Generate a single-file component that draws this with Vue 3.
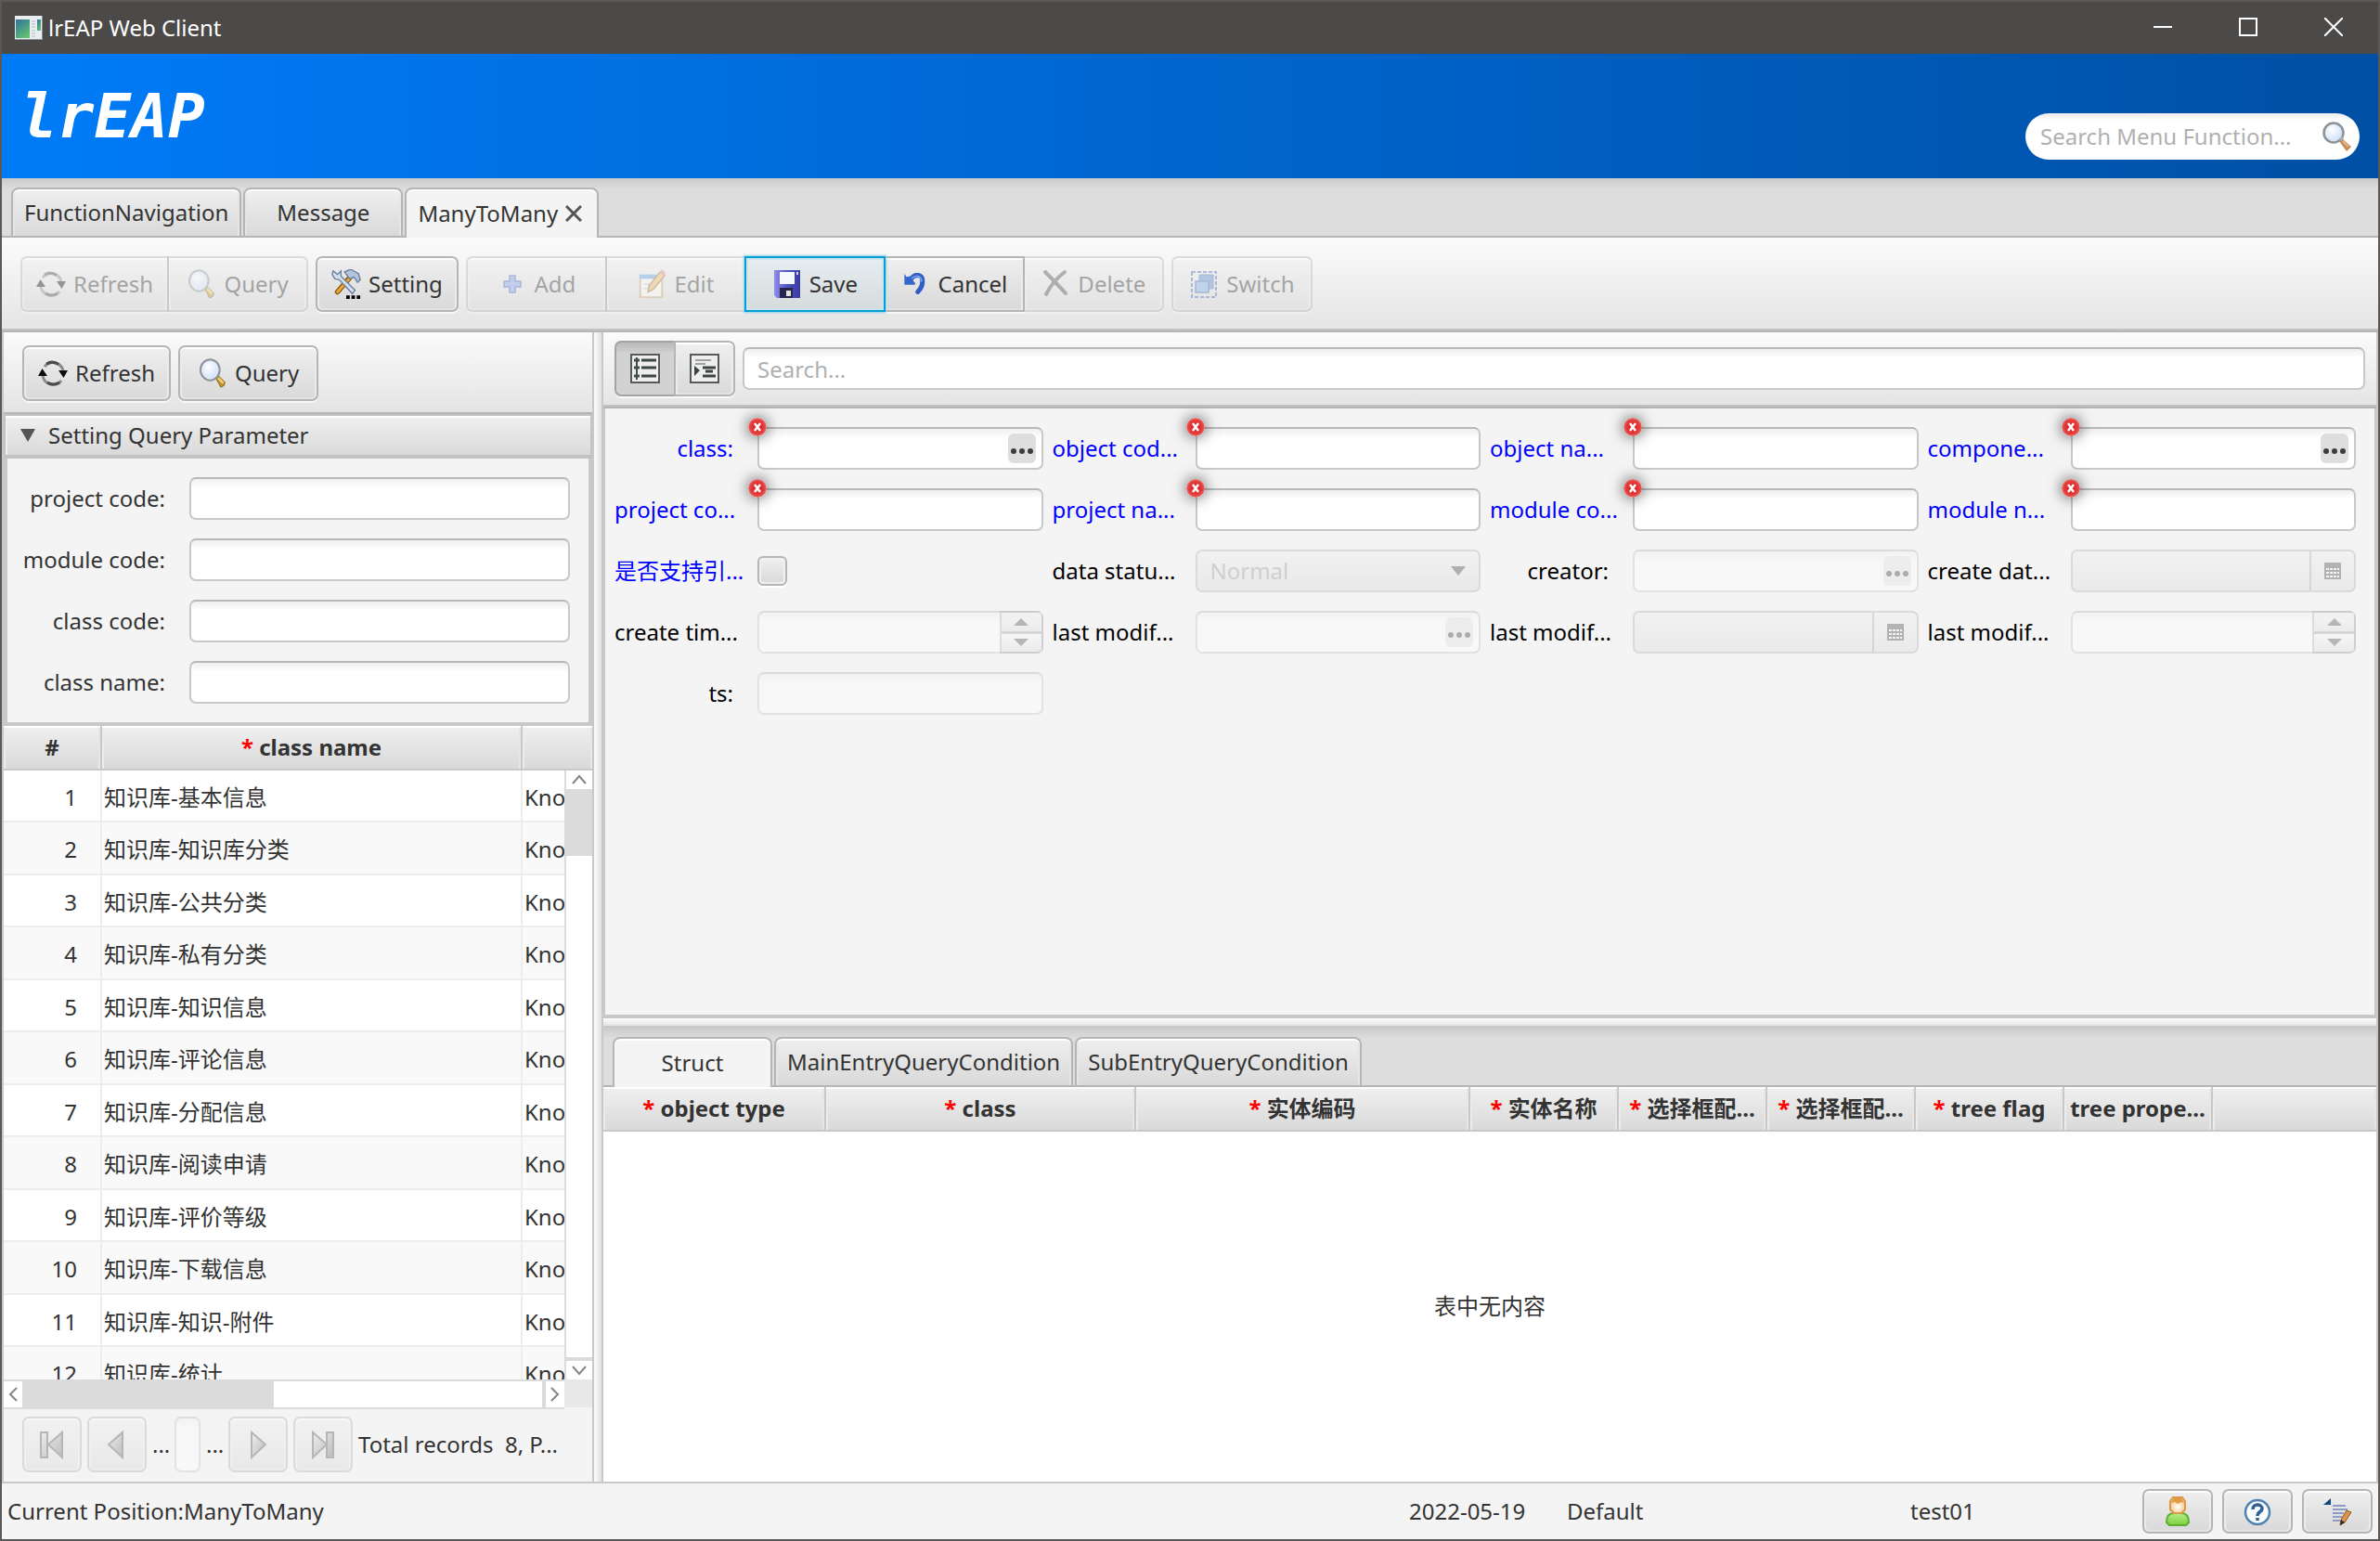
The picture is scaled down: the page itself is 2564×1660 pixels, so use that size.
<script setup>
const mainTabs = [
  { label: 'FunctionNavigation' },
  { label: 'Message' },
  { label: 'ManyToMany', active: true, closable: true },
]

const toolGroups = [
  [
    { label: 'Refresh', icon: 'refresh', disabled: true },
    { label: 'Query', icon: 'find', disabled: true },
  ],
  [{ label: 'Setting', icon: 'tools' }],
  [
    { label: 'Add', icon: 'add', disabled: true },
    { label: 'Edit', icon: 'edit', disabled: true },
    { label: 'Save', icon: 'save', focused: true },
    { label: 'Cancel', icon: 'undo' },
    { label: 'Delete', icon: 'delete', disabled: true },
  ],
  [{ label: 'Switch', icon: 'switch', disabled: true }],
]

const queryFields = ['project code:', 'module code:', 'class code:', 'class name:']

const classNames = [
  '知识库-基本信息',
  '知识库-知识库分类',
  '知识库-公共分类',
  '知识库-私有分类',
  '知识库-知识信息',
  '知识库-评论信息',
  '知识库-分配信息',
  '知识库-阅读申请',
  '知识库-评价等级',
  '知识库-下载信息',
  '知识库-知识-附件',
  '知识库-统计',
]

const formFields = [
  { label: 'class:', type: 'lookup', required: true, end: true },
  { label: 'object cod...', type: 'text', required: true },
  { label: 'object na...', type: 'text', required: true },
  { label: 'compone...', type: 'lookup', required: true },
  { label: 'project co...', type: 'text', required: true },
  { label: 'project na...', type: 'text', required: true },
  { label: 'module co...', type: 'text', required: true },
  { label: 'module n...', type: 'text', required: true },
  { label: '是否支持引...', type: 'check', blue: true },
  { label: 'data statu...', type: 'select', disabled: true },
  { label: 'creator:', type: 'lookup', disabled: true, end: true },
  { label: 'create dat...', type: 'date', disabled: true },
  { label: 'create tim...', type: 'spinner', disabled: true },
  { label: 'last modif...', type: 'lookup', disabled: true },
  { label: 'last modif...', type: 'date', disabled: true },
  { label: 'last modif...', type: 'spinner', disabled: true },
  { label: 'ts:', type: 'text', disabled: true, end: true },
]

const subTabs = [
  { label: 'Struct', active: true },
  { label: 'MainEntryQueryCondition' },
  { label: 'SubEntryQueryCondition' },
]

const columns = [
  { label: 'object type', required: true, width: 240 },
  { label: 'class', required: true, width: 334 },
  { label: '实体编码', required: true, width: 360 },
  { label: '实体名称', required: true, width: 160 },
  { label: '选择框配...', required: true, width: 160 },
  { label: '选择框配...', required: true, width: 160 },
  { label: 'tree flag', required: true, width: 160 },
  { label: 'tree prope...', width: 160 },
]
</script>

<template>
  <div class="window">
    <svg class="sprite" width="0" height="0" aria-hidden="true">
      <defs>
        <radialGradient id="g-lens" cx="0.4" cy="0.35" r="0.7">
          <stop offset="0" stop-color="#ffffff" />
          <stop offset="1" stop-color="#c9dcf8" />
        </radialGradient>
        <linearGradient id="g-disk" x1="0" y1="0" x2="1" y2="0">
          <stop offset="0" stop-color="#8f8fe8" />
          <stop offset="0.5" stop-color="#5252c4" />
          <stop offset="1" stop-color="#3a3aa0" />
        </linearGradient>
        <linearGradient id="g-gray" x1="0" y1="0" x2="1" y2="1">
          <stop offset="0" stop-color="#e4e4e4" />
          <stop offset="1" stop-color="#6c6c6c" />
        </linearGradient>
        <linearGradient id="g-green" x1="0" y1="0" x2="0" y2="1">
          <stop offset="0" stop-color="#b4ee8a" />
          <stop offset="1" stop-color="#7bcf3c" />
        </linearGradient>
        <radialGradient id="g-head" cx="0.5" cy="0.6" r="0.6">
          <stop offset="0" stop-color="#ffffff" />
          <stop offset="1" stop-color="#f6c07c" />
        </radialGradient>
        <linearGradient id="g-app" x1="0" y1="0" x2="0.6" y2="1">
          <stop offset="0" stop-color="#2f6f9f" />
          <stop offset="1" stop-color="#5fbf72" />
        </linearGradient>
        <radialGradient id="g-err" cx="0.5" cy="0.5" r="0.5">
          <stop offset="0" stop-color="#d81e1e" />
          <stop offset="0.7" stop-color="#e23a3a" />
          <stop offset="1" stop-color="#ea6a66" />
        </radialGradient>
      </defs>
      <symbol id="i-app" viewBox="0 0 30 26">
        <path d="M0 0h30v26H0z" fill="#e9edf0" />
        <path d="M1 4h15v20H1z" fill="url(#g-app)" />
        <path d="M24 4h4v12h-4z" fill="url(#g-app)" />
        <path d="M18 6h4M18 9h4M18 12h4M18 16h4M18 19h4M18 22h4" stroke="#b9bdc1" stroke-width="1" />
        <path d="M0 25.500h30M29.500 0v26" stroke="#8b9196" stroke-width="1" />
      </symbol>
      <symbol id="i-refresh" viewBox="0 0 32 32">
        <path d="M7 9A11.500 12 0 0 1 27 13" fill="none" stroke="#8a8a8a" stroke-width="3" />
        <path d="M25 24A11.500 12 0 0 1 5 19" fill="none" stroke="#8a8a8a" stroke-width="3" />
        <path d="M9 6A12 12 0 0 1 22 6.500M23 26A12 12 0 0 1 10 26" fill="none" stroke="#4a4a4a" stroke-width="3" />
        <path d="M22 13h10l-4.500 8z" fill="#0c0c0c" />
        <path d="M0 19l4.500-8L10 19z" fill="#0c0c0c" />
      </symbol>
      <symbol id="i-find" viewBox="0 0 32 36">
        <path d="M20 24l3-3 8 8-1 4-4 2z" fill="#c9922a" stroke="#7a5a1e" stroke-width="1" />
        <path d="M22 25l2-2 6 6-2 2z" fill="#f2d070" />
        <ellipse cx="13" cy="14" rx="11.500" ry="12.500" fill="url(#g-lens)" stroke="#8f9499" stroke-width="2.500" />
        <ellipse cx="13" cy="14" rx="9.500" ry="10.500" fill="none" stroke="#dfe9fa" stroke-width="1.500" />
      </symbol>
      <symbol id="i-find-copper" viewBox="0 0 32 32">
        <path d="M18 21l3-3 10 9-5 5z" fill="#c38a55" />
        <path d="M21 22l2-2 6 6-2 2z" fill="#e0b184" />
        <circle cx="12" cy="12" r="10.500" fill="url(#g-lens)" stroke="#8d9298" stroke-width="2.500" />
        <path d="M19 20l3-3" stroke="#a9adb3" stroke-width="3" />
      </symbol>
      <symbol id="i-tools" viewBox="0 0 32 34">
        <path d="M24 5L6 26" stroke="#8a5a14" stroke-width="6" stroke-linecap="round" />
        <path d="M22 8L6 26" stroke="#f0a830" stroke-width="3" stroke-linecap="round" />
        <path d="M14 3l7-3 9 5 2 7-3 3-4-6-5 2z" fill="#b4c6de" stroke="#6c819e" stroke-width="1.500" />
        <path d="M1 2l5 4 4-4v6l16 16-3 4L8 12 3 11 0 6z" fill="#d3e0f0" stroke="#6c819e" stroke-width="1.500" />
        <path d="M16 30h4v4h-4zM22 30h4v4h-4zM28 30h4v4h-4z" fill="#000000" />
      </symbol>
      <symbol id="i-add" viewBox="0 0 32 32">
        <path d="M14 7h6v6h6v6h-6v6h-6v-6H8v-6h6z" fill="#7da0e8" stroke="#3f62b8" stroke-width="1.500" />
      </symbol>
      <symbol id="i-edit" viewBox="0 0 32 34">
        <path d="M3 8h25v24H3z" fill="#fbfbf2" stroke="#c3a368" stroke-width="2" />
        <path d="M2 6h22v5H2z" fill="#5aa0d8" />
        <path d="M7 17h8M7 22h6" stroke="#c8d4e2" stroke-width="2" />
        <path d="M26 3l5 4-13 16-6 3 1-7z" fill="#e8b860" stroke="#9a6a28" stroke-width="1.500" />
        <path d="M25 4l3-4 4 4-2 4z" fill="#e08a84" />
      </symbol>
      <symbol id="i-save" viewBox="0 0 32 32">
        <path d="M2 1h28v30H5l-3-3z" fill="url(#g-disk)" />
        <path d="M8 3h16v13H8z" fill="#f6f8ff" />
        <path d="M26 3h2v3h-2z" fill="#d8d8ff" />
        <path d="M8 20h14v11H8z" fill="#26264c" />
        <path d="M15 23h5v6h-5z" fill="#e2e2e2" />
      </symbol>
      <symbol id="i-undo" viewBox="-2 -2 38 38">
        <path d="M10 11C15 3 26 4 25 14c0 7-3 10-6 13" fill="none" stroke="#2f5fc4" stroke-width="6" stroke-linecap="round" />
        <path d="M11 10C16 5 24 6 24 14" fill="none" stroke="#7ba6ee" stroke-width="2" />
        <path d="M2 4l3 4 3-1 8 9-1 2H2z" fill="#3467cc" />
      </symbol>
      <symbol id="i-delete" viewBox="0 0 32 32">
        <path d="M5 3C11 9 19 17 27 26M26 3C18 9 11 17 6 27" fill="none" stroke="#4e4e4e" stroke-width="4" stroke-linecap="round" />
      </symbol>
      <symbol id="i-switch" viewBox="0 0 32 32">
        <path d="M3 3h26v27H3z" fill="none" stroke="#4267b4" stroke-width="2" stroke-dasharray="4 2" />
        <path d="M11 6h15v15H11z" fill="#5b86cc" stroke="#3d66b0" stroke-width="1" />
        <path d="M7 13h14v12H7z" fill="#7aaee4" stroke="#3d66b0" stroke-width="1.500" />
      </symbol>
      <symbol id="i-list" viewBox="0 0 32 32">
        <path d="M1 1h30v30H1z" fill="#eeeeee" stroke="#555b5b" stroke-width="2" />
        <path d="M7 4v24" stroke="#454c4c" stroke-width="2" />
        <path d="M12 7h16M12 15h16M12 24h16" stroke="#3c4444" stroke-width="3" />
        <path d="M4 7h6M4 15h6M4 24h6" stroke="#454c4c" stroke-width="3" />
      </symbol>
      <symbol id="i-outline" viewBox="0 0 32 32">
        <path d="M1 1h30v30H1z" fill="#eeeeee" stroke="#555b5b" stroke-width="2" />
        <path d="M6 7h17M6 11h11" stroke="#a2a2a2" stroke-width="2" />
        <path d="M14 15h14M17 19h8M14 24h14" stroke="#3c4444" stroke-width="3" />
        <path d="M5 13l6 5-6 6z" fill="#3c4444" />
      </symbol>
      <symbol id="i-error" viewBox="0 0 20 20">
        <circle cx="10" cy="10" r="10" fill="url(#g-err)" />
        <path d="M7 6l6 8M13 6l-6 8" stroke="#ffffff" stroke-width="2.500" />
      </symbol>
      <symbol id="i-calendar" viewBox="0 0 18 20">
        <path d="M0 1h18v18H0z" fill="#5a5a5a" />
        <path d="M2 8h3M6 8h3M10 8h3M14 8h2M2 12h3M6 12h3M10 12h3M14 12h2M2 16h3M6 16h3M10 16h3M14 16h2" stroke="#ffffff" stroke-width="2" />
      </symbol>
      <symbol id="i-first" viewBox="0 0 32 32">
        <path d="M4 3h7v27H4zM27 3v27L12 16z" fill="url(#g-gray)" stroke="#5c5c5c" stroke-width="2" />
      </symbol>
      <symbol id="i-prev" viewBox="0 0 32 32">
        <path d="M22 3v27L7 16z" fill="url(#g-gray)" stroke="#5c5c5c" stroke-width="2" />
      </symbol>
      <symbol id="i-next" viewBox="0 0 32 32">
        <path d="M9 3v27l15-14z" fill="url(#g-gray)" stroke="#5c5c5c" stroke-width="2" />
      </symbol>
      <symbol id="i-last" viewBox="0 0 32 32">
        <path d="M20 3h7v27h-7zM5 3v27l15-14z" fill="url(#g-gray)" stroke="#5c5c5c" stroke-width="2" />
      </symbol>
      <symbol id="i-user" viewBox="0 0 32 32">
        <path d="M4 28c0-7 3-10 8-10h8c5 0 8 3 8 10l-3 3H7z" fill="url(#g-green)" stroke="#5fae2e" stroke-width="2" />
        <path d="M8 5l3-4h10l3 4v9l-4 4h-8l-4-4z" fill="url(#g-head)" stroke="#dc9a44" stroke-width="2" />
        <path d="M9 7l3-5h8l3 5-3-1-4 2-3-2z" fill="#e09c45" />
      </symbol>
      <symbol id="i-help" viewBox="0 0 32 32">
        <circle cx="16" cy="17" r="13" fill="#fbfdff" stroke="#4c82b2" stroke-width="2.500" />
        <path d="M11 14c0-7 10-6 10-1 0 4-5 3-5 8M16 23v3" fill="none" stroke="#2f6295" stroke-width="3.500" />
      </symbol>
      <symbol id="i-note" viewBox="0 0 32 32">
        <path d="M1 9l8-7v7z" fill="#0f4a7a" />
        <path d="M11 10h14M11 14h16M11 18h12M11 22h10M11 26h8" stroke="#8e9cc8" stroke-width="2" />
        <path d="M26 15l5 2-7 11-5 3 1-6z" fill="#dc9448" stroke="#8a5a2a" stroke-width="1" />
        <path d="M20 25l4 3-5 3z" fill="#2c2c2c" />
      </symbol>
    </svg>

    <div class="titlebar">
      <svg class="app-icon"><use href="#i-app" /></svg>
      <span class="title">lrEAP Web Client</span>
      <button class="win-btn" aria-label="Minimize">
        <svg width="20" height="20"><path d="M0 10h20" stroke="#fff" stroke-width="2" /></svg>
      </button>
      <button class="win-btn" aria-label="Maximize">
        <svg width="20" height="20"><path d="M1 1h18v18H1z" fill="none" stroke="#fff" stroke-width="2" /></svg>
      </button>
      <button class="win-btn" aria-label="Close">
        <svg width="20" height="20"><path d="M0 0l20 20M20 0L0 20" stroke="#fff" stroke-width="2" /></svg>
      </button>
    </div>

    <header class="banner">
      <h1 class="logo">lrEAP</h1>
      <div class="menu-search">
        <input type="text" aria-label="Search Menu Function" placeholder="Search Menu Function..." />
        <svg class="icon"><use href="#i-find-copper" /></svg>
      </div>
    </header>

    <nav class="tabs">
      <button v-for="t in mainTabs" :key="t.label" class="tab" :class="{ active: t.active }">
        {{ t.label }}
        <svg v-if="t.closable" class="tab-close" viewBox="0 0 18 18">
          <path d="M1 1l16 16M17 1L1 17" stroke="#555" stroke-width="3" />
        </svg>
      </button>
    </nav>

    <div class="toolbar main-toolbar">
      <div v-for="(group, g) in toolGroups" :key="g" class="group">
        <button
          v-for="b in group"
          :key="b.label"
          class="btn"
          :class="{ focused: b.focused }"
          :disabled="b.disabled"
        >
          <svg class="icon"><use :href="'#i-' + b.icon" /></svg>{{ b.label }}
        </button>
      </div>
    </div>

    <main class="body">
      <section class="left">
        <div class="toolbar left-toolbar">
          <button class="btn"><svg class="icon"><use href="#i-refresh" /></svg>Refresh</button>
          <button class="btn"><svg class="icon"><use href="#i-find" /></svg>Query</button>
        </div>

        <button class="pane-title">
          <svg width="16" height="16"><path d="M0 1h16L8 15z" fill="#555" /></svg>
          Setting Query Parameter
        </button>
        <form class="query-form">
          <template v-for="(label, i) in queryFields" :key="label">
            <label :for="'q' + i">{{ label }}</label>
            <input :id="'q' + i" class="field" type="text" />
          </template>
        </form>

        <div class="list">
          <table class="grid list-grid">
            <colgroup>
              <col class="col-no" />
              <col class="col-name" />
              <col />
            </colgroup>
            <thead>
              <tr>
                <th>#</th>
                <th><span class="star">*</span> class name</th>
                <th></th>
              </tr>
            </thead>
            <tbody>
              <tr v-for="(name, i) in classNames" :key="name">
                <td class="no">{{ i + 1 }}</td>
                <td>{{ name }}</td>
                <td>Kno</td>
              </tr>
            </tbody>
          </table>
          <div class="vscroll">
            <svg class="v-arrow" viewBox="0 0 28 20"><path d="M7 14l7-8 7 8" fill="none" stroke="#858585" stroke-width="2" /></svg>
            <div class="v-track"><div class="v-thumb"></div></div>
            <svg class="v-arrow" viewBox="0 0 28 20"><path d="M7 6l7 8 7-8" fill="none" stroke="#858585" stroke-width="2" /></svg>
          </div>
        </div>
        <div class="hscroll">
          <div class="h-bar">
            <svg class="h-arrow" viewBox="0 0 20 28"><path d="M14 7l-7 7 7 7" fill="none" stroke="#858585" stroke-width="2" /></svg>
            <div class="h-track"><div class="h-thumb"></div></div>
            <svg class="h-arrow" viewBox="0 0 20 28"><path d="M6 7l7 7-7 7" fill="none" stroke="#858585" stroke-width="2" /></svg>
          </div>
          <div class="corner"></div>
        </div>

        <div class="pager">
          <button class="btn square" disabled aria-label="First page"><svg class="icon"><use href="#i-first" /></svg></button>
          <button class="btn square" disabled aria-label="Previous page"><svg class="icon"><use href="#i-prev" /></svg></button>
          <span class="dots">...</span>
          <input class="field page-no" type="text" disabled aria-label="Page" />
          <span class="dots">...</span>
          <button class="btn square" disabled aria-label="Next page"><svg class="icon"><use href="#i-next" /></svg></button>
          <button class="btn square" disabled aria-label="Last page"><svg class="icon"><use href="#i-last" /></svg></button>
          <span class="total">Total records&nbsp; 8, P...</span>
        </div>
      </section>

      <div class="split-v"></div>

      <section class="right">
        <div class="toolbar right-toolbar">
          <div class="group">
            <button class="btn toggle on" aria-label="List view"><svg class="icon"><use href="#i-list" /></svg></button>
            <button class="btn toggle" aria-label="Outline view"><svg class="icon"><use href="#i-outline" /></svg></button>
          </div>
          <input class="field" type="text" placeholder="Search..." aria-label="Search" />
        </div>

        <form class="form">
          <div class="form-grid">
            <template v-for="(f, i) in formFields" :key="i">
              <label :for="'f' + i" :class="{ blue: f.required || f.blue, end: f.end }">{{ f.label }}</label>
              <div class="cell">
                <input v-if="f.type === 'check'" :id="'f' + i" class="check" type="checkbox" />
                <template v-else-if="f.type === 'select'">
                  <select :id="'f' + i" class="field select" disabled>
                    <option>Normal</option>
                  </select>
                  <svg class="caret" viewBox="0 0 16 10"><path d="M0 0h16L8 10z" fill="#555" /></svg>
                </template>
                <input
                  v-else
                  :id="'f' + i"
                  class="field"
                  :class="{ shaded: f.type === 'date' }"
                  type="text"
                  :disabled="f.disabled"
                />
                <button v-if="f.type === 'lookup'" type="button" class="lookup" :disabled="f.disabled" aria-label="Choose">
                  <svg width="24" height="6"><circle cx="3" cy="3" r="3" /><circle cx="12" cy="3" r="3" /><circle cx="21" cy="3" r="3" /></svg>
                </button>
                <button v-if="f.type === 'date'" type="button" class="pick" disabled aria-label="Pick date">
                  <svg width="18" height="20"><use href="#i-calendar" /></svg>
                </button>
                <div v-if="f.type === 'spinner'" class="spin">
                  <button type="button" disabled aria-label="Increase"><svg width="16" height="8"><path d="M0 8h16L8 0z" fill="#555" /></svg></button>
                  <button type="button" disabled aria-label="Decrease"><svg width="16" height="8"><path d="M0 0h16L8 8z" fill="#555" /></svg></button>
                </div>
                <svg v-if="f.required" class="error"><use href="#i-error" /></svg>
              </div>
            </template>
          </div>
        </form>

        <div class="split-h"></div>

        <div class="detail">
          <nav class="tabs">
            <button v-for="t in subTabs" :key="t.label" class="tab" :class="{ active: t.active }">{{ t.label }}</button>
          </nav>
          <table class="grid">
            <colgroup>
              <col v-for="(c, i) in columns" :key="i" :style="{ width: c.width + 'px' }" />
              <col />
            </colgroup>
            <thead>
              <tr>
                <th v-for="(c, i) in columns" :key="i"><span v-if="c.required" class="star">*&nbsp;</span>{{ c.label }}</th>
                <th></th>
              </tr>
            </thead>
          </table>
          <div class="empty">表中无内容</div>
        </div>
      </section>
    </main>

    <footer class="status">
      <span class="position">Current Position:ManyToMany</span>
      <span class="date">2022-05-19</span>
      <span class="scheme">Default</span>
      <span class="user">test01</span>
      <button class="btn status-btn" aria-label="User"><svg class="icon"><use href="#i-user" /></svg></button>
      <button class="btn status-btn" aria-label="Help"><svg class="icon"><use href="#i-help" /></svg></button>
      <button class="btn status-btn" aria-label="Notes"><svg class="icon"><use href="#i-note" /></svg></button>
    </footer>
  </div>
</template>

<style>
body {
  margin: 0;
}
</style>

<style scoped>
* {
  box-sizing: border-box;
}
.window {
  display: flex;
  flex-direction: column;
  height: 100vh;
  overflow: hidden;
  border: 2px solid #5a5958;
  background: #f4f4f4;
  color: #333;
  font: 24px/32px 'Noto Sans', 'Noto Sans CJK SC', sans-serif;
}
.sprite {
  position: absolute;
}
button,
input,
select {
  font: inherit;
  color: inherit;
  margin: 0;
}
svg {
  flex: none;
}
.icon {
  width: 32px;
  height: 32px;
}

/* title bar */
.titlebar {
  display: flex;
  flex: none;
  align-items: center;
  height: 56px;
  padding-left: 14px;
  background: #4c4a48;
  color: #fff;
}
.app-icon {
  width: 30px;
  height: 26px;
}
.title {
  flex: 1;
  padding-left: 6px;
}
.win-btn {
  display: flex;
  align-items: center;
  justify-content: center;
  width: 92px;
  height: 56px;
  padding: 0 4px 2px 0;
  border: 0;
  background: none;
}

/* banner */
.banner {
  display: flex;
  flex: none;
  align-items: flex-end;
  justify-content: space-between;
  height: 134px;
  padding: 0 20px;
  background: linear-gradient(90deg, #007bf8, #0050a4);
}
.logo {
  margin: 0 0 26px;
  color: #fff;
  font: italic bold 66px/80px 'DejaVu Sans Mono', monospace;
}
.menu-search {
  display: flex;
  align-items: center;
  width: 360px;
  height: 50px;
  margin-bottom: 20px;
  padding: 0 8px 0 16px;
  border-radius: 25px;
  background: linear-gradient(#ececec, #fff 8px);
}
.menu-search input {
  flex: 1;
  min-width: 0;
  padding: 0;
  border: 0;
  outline: 0;
  background: none;
}
input::placeholder {
  color: #b0b0b0;
  opacity: 1;
}

/* tabs */
.tabs {
  display: flex;
  flex: none;
  gap: 2px;
  height: 64px;
  padding: 10px 10px 0;
  border-bottom: 2px solid #b5b5b5;
  background: linear-gradient(#cbcbcb, #dddddd 12px);
}
.tab {
  display: flex;
  align-items: center;
  justify-content: center;
  gap: 8px;
  min-width: 172px;
  height: 52px;
  padding: 0 10px;
  border: 2px solid #b5b5b5;
  border-bottom: 0;
  border-radius: 8px 8px 0 0;
  background: linear-gradient(#efefef, #d9d9d9);
  box-shadow: inset 0 2px #fff, inset 2px 0 #e6e6e6, inset -2px 0 #e6e6e6;
}
.tabs .tab {
  padding: 0 12px;
}
.tab.active {
  height: 54px;
  background: #f4f4f4;
  box-shadow: inset 0 2px #fff;
}
.tab-close {
  width: 18px;
  height: 18px;
  margin-right: 4px;
}

/* toolbars and buttons */
.toolbar {
  display: flex;
  flex: none;
  gap: 8px;
  border-bottom: 2px solid #b5b5b5;
  background: linear-gradient(#fbfbfb, #e4e4e4);
}
.main-toolbar {
  height: 102px;
  padding: 20px 20px 0;
  box-shadow: inset 0 -2px #c2c2c2;
}
.group {
  display: flex;
}
.btn {
  position: relative;
  display: flex;
  align-items: center;
  justify-content: center;
  gap: 8px;
  min-width: 151px;
  height: 60px;
  padding: 0 15px;
  border: 2px solid #b5b5b5;
  border-radius: 7px;
  background: linear-gradient(#efefef, #d9d9d9);
  box-shadow: inset 0 2px #fff, inset 2px 0 #ececec, inset -2px 0 #ececec, inset 0 -2px #e2e2e2, 0 2px #f8f8f8;
}
.btn:disabled {
  opacity: 0.4;
}
.group .btn:not(:first-child) {
  margin-left: -2px;
  border-top-left-radius: 0;
  border-bottom-left-radius: 0;
}
.group .btn:not(:last-child) {
  border-top-right-radius: 0;
  border-bottom-right-radius: 0;
}
.main-toolbar .btn {
  min-width: 152px;
}
.btn.focused {
  z-index: 1;
  border-color: #039ed3;
  background: linear-gradient(#e6eef1, #d6dadc);
  box-shadow: inset 0 0 0 2px #cde4ee, 0 0 2px 1px #8fd0e8;
}

/* left column */
.body {
  display: flex;
  flex: 1;
  min-height: 0;
}
.left {
  display: flex;
  flex: none;
  flex-direction: column;
  width: 638px;
  border: solid #c8c8c8;
  border-width: 0 2px;
}
.left-toolbar {
  height: 88px;
  padding: 14px 20px 0;
}
.pane-title {
  display: flex;
  flex: none;
  align-items: center;
  gap: 14px;
  height: 48px;
  padding: 0 16px;
  border: solid #c2c2c2;
  border-width: 2px 2px 4px;
  background: linear-gradient(#f0f0f0, #d9d9d9);
  box-shadow: inset 0 2px #fff, inset 2px 0 #f0f0f0;
}
.query-form {
  display: grid;
  flex: none;
  grid-template-columns: 170px 1fr;
  gap: 20px 26px;
  align-items: center;
  padding: 20px 20px 20px 0;
  border: solid #c8c8c8;
  border-width: 0 4px 4px;
  background: #f4f4f4;
}
.query-form label {
  text-align: right;
}
.field {
  display: block;
  width: 100%;
  min-width: 0;
  height: 46px;
  padding: 0 14px;
  border: 2px solid #c8c8c8;
  border-top-color: #b8b8b8;
  border-radius: 7px;
  outline: 0;
  background: linear-gradient(#f0f0f0, #fff 10px);
}
.field:disabled {
  opacity: 0.4;
}

/* tables */
.grid {
  width: 100%;
  border-collapse: separate;
  border-spacing: 0;
  table-layout: fixed;
}
.grid th {
  height: 48px;
  padding: 0;
  border: solid #c8c8c8;
  border-width: 0 2px 2px 0;
  background: linear-gradient(#f0f0f0, #d9d9d9);
  box-shadow: inset 0 2px #fff, inset 2px 0 #ececec, inset -2px 0 #e6e6e6;
  overflow: hidden;
  white-space: nowrap;
}
.grid th:last-child {
  border-right: 0;
}
.star {
  color: #f00;
}
.list {
  position: relative;
  flex: 1;
  min-height: 0;
  overflow: hidden;
  background: #fff;
}
.list-grid .col-no {
  width: 106px;
}
.list-grid .col-name {
  width: 453px;
}
.list-grid td {
  height: 56px;
  padding: 3px 0 0 2px;
  border: solid #ededed;
  border-width: 0 2px 2px 0;
  white-space: nowrap;
}
.list-grid tr:nth-child(even) td {
  height: 57px;
  background: #f9f9f9;
}
.list-grid .no {
  padding-right: 25px;
  text-align: right;
}
.vscroll {
  position: absolute;
  top: 48px;
  right: 0;
  bottom: 0;
  display: flex;
  flex-direction: column;
  width: 30px;
  border-left: 2px solid #dbdbdb;
  background: #fff;
}
.v-arrow {
  width: 28px;
  height: 20px;
}
.v-track {
  flex: 1;
  border-bottom: 4px solid #dbdbdb;
}
.v-thumb {
  height: 72px;
  background: #dbdbdb;
}
.hscroll {
  display: flex;
  flex: none;
  height: 32px;
}
.h-bar {
  display: flex;
  flex: 1;
  border: solid #dbdbdb;
  border-width: 2px 0;
  background: #fff;
}
.h-arrow {
  width: 20px;
  height: 28px;
}
.h-track {
  flex: 1;
  border-right: 4px solid #dbdbdb;
}
.h-thumb {
  width: 271px;
  height: 28px;
  background: #dbdbdb;
}
.corner {
  width: 30px;
  height: 30px;
  background: #e8e8e8;
}

/* pager */
.pager {
  display: flex;
  flex: none;
  align-items: center;
  gap: 6px;
  height: 78px;
  padding: 0 20px 2px;
}
.btn.square {
  min-width: 64px;
  padding: 0;
}
.dots {
  width: 18px;
}
.page-no {
  width: 28px;
  height: 60px;
  padding: 0;
}
.total {
  white-space: nowrap;
}

/* splitters */
.split-v {
  flex: none;
  width: 8px;
  background: linear-gradient(90deg, #fcfcfc, #e0e0e0);
}
.split-h {
  flex: none;
  height: 8px;
  background: linear-gradient(#fcfcfc, #e4e4e4);
}

/* right column */
.right {
  display: flex;
  flex: 1;
  flex-direction: column;
  min-width: 0;
  border: solid #c8c8c8;
  border-width: 0 2px;
}
.right-toolbar {
  align-items: center;
  height: 82px;
  padding: 0 12px 2px;
  box-shadow: inset 0 -2px #c2c2c2;
}
.btn.toggle {
  min-width: 66px;
  padding: 0;
}
.btn.on {
  background: linear-gradient(#b9b9b9, #d2d2d2 12px);
  border-color: #a4a4a4;
  box-shadow: 0 2px #f8f8f8;
}
.form {
  flex: 4 1 0;
  min-height: 0;
  border: solid #c8c8c8;
  border-width: 0 2px 4px;
}
.form-grid {
  display: grid;
  grid-template-columns: repeat(4, 144px 1fr);
  gap: 20px 10px;
  align-items: center;
  padding: 20px 20px 20px 10px;
}
.form-grid label {
  color: #000;
  white-space: nowrap;
}
.form-grid label.blue {
  color: #00f;
}
.form-grid label.end {
  padding-right: 16px;
  text-align: right;
}
.cell {
  position: relative;
  display: flex;
  align-items: center;
  height: 46px;
}
.check {
  appearance: none;
  width: 32px;
  height: 32px;
  border: 2px solid #b5b5b5;
  border-radius: 6px;
  background: linear-gradient(#efefef, #d9d9d9);
  box-shadow: inset 0 0 0 2px #f0f0f0, 0 2px #fff;
}
.select {
  appearance: none;
  background: linear-gradient(#efefef, #d9d9d9);
  border-color: #b5b5b5;
  color: #999;
}
.shaded {
  border-color: #b5b5b5;
  background: linear-gradient(#efefef, #dcdcdc);
}
.caret {
  position: absolute;
  right: 16px;
  width: 16px;
  height: 10px;
  opacity: 0.4;
}
.lookup {
  position: absolute;
  right: 8px;
  display: flex;
  align-items: center;
  justify-content: center;
  width: 30px;
  height: 32px;
  padding: 6px 0 0;
  border: 0;
  border-radius: 6px;
  background: #dedede;
  fill: #3c3c3c;
}
.lookup:disabled {
  opacity: 0.4;
}
.pick {
  position: absolute;
  right: 2px;
  display: flex;
  align-items: center;
  justify-content: center;
  width: 48px;
  height: 42px;
  padding: 0;
  border: 0;
  border-left: 2px solid #b5b5b5;
  background: none;
  opacity: 0.4;
}
.spin {
  position: absolute;
  right: 0;
  display: flex;
  flex-direction: column;
  width: 47px;
  height: 46px;
  border: 2px solid #b5b5b5;
  border-radius: 0 7px 7px 0;
  background: #f4f4f4;
  opacity: 0.4;
}
.spin button {
  display: flex;
  flex: 1;
  align-items: center;
  justify-content: center;
  min-height: 0;
  padding: 0;
  border: 0;
  background: linear-gradient(#f4f4f4, #d9d9d9);
}
.spin button + button {
  border-top: 3px solid #a5a5a5;
}
.error {
  position: absolute;
  top: -10px;
  left: -10px;
  width: 20px;
  height: 20px;
  border-radius: 50%;
  box-shadow: 0 0 16px rgba(0, 0, 0, 0.7);
}

/* detail */
.detail {
  display: flex;
  flex: 3 1 0;
  flex-direction: column;
  min-height: 0;
  border-top: 2px solid #c8c8c8;
  background: #fff;
}
.empty {
  display: flex;
  flex: 1;
  align-items: center;
  justify-content: center;
}

/* status bar */
.status {
  display: flex;
  flex: none;
  align-items: center;
  gap: 10px;
  height: 62px;
  padding: 0 6px;
  border-top: 2px solid #c8c8c8;
}
.position {
  flex: 1;
}
.date {
  width: 160px;
}
.scheme {
  width: 360px;
}
.user {
  width: 240px;
}
.btn.status-btn {
  min-width: 76px;
  height: 48px;
  padding: 0;
}
</style>
